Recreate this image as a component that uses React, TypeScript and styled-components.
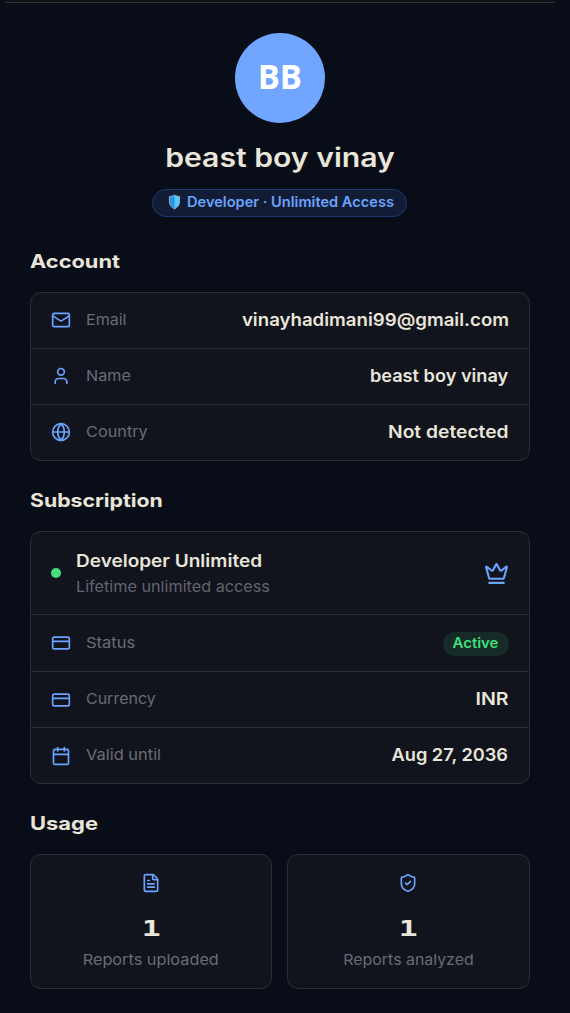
import React from "react";
import styled, { createGlobalStyle } from "styled-components";
import { Mail, User, Globe, Crown, CreditCard, Calendar, FileText, ShieldCheck } from "lucide-react";

const GlobalStyle = createGlobalStyle`
  * { box-sizing: border-box; }
  body {
    margin: 0;
    background: #090d18;
    color: #e9e5d9;
    font-family: Inter, "Liberation Sans", sans-serif;
  }
`;

const Page = styled.main`
  width: 570px;
  height: 1013px;
  overflow: hidden;
  padding: 0 15px 0 5px;
  background: #090d18;
`;

const TopBar = styled.div`
  height: 3px;
  background: #101114;
  border-bottom: 1px solid #303338;
`;

const Content = styled.div`
  padding: 30px 25px 0;
`;

const Profile = styled.header`
  display: flex;
  flex-direction: column;
  align-items: center;
`;

const Avatar = styled.div`
  width: 90px;
  height: 90px;
  padding-bottom: 4px;
  border-radius: 50%;
  background: #70a6ff;
  display: grid;
  place-items: center;
  color: #fff;
  font: 700 34px/1 "Open Sans", sans-serif;
`;

const Stretch = styled.span<{ $x?: number; $from?: string }>`
  display: inline-block;
  white-space: nowrap;
  transform: scaleX(${(p) => p.$x ?? 1});
  transform-origin: ${(p) => p.$from ?? "left"} center;
`;

const DisplayName = styled.h1`
  margin: 19px 0 0;
  font-size: 26px;
  line-height: 32px;
  font-weight: 600;
`;

const RoleBadge = styled.div`
  display: flex;
  align-items: center;
  gap: 6px;
  width: 255px;
  height: 28px;
  margin: 15px 1px 0 0;
  padding: 0 0 3px 15px;
  border: 1px solid #1b3974;
  border-radius: 14px;
  background: #121d35;
  color: #6ba3ff;
  font-size: 14px;
  font-weight: 600;
`;

const SectionTitle = styled.h2<{ $top: number }>`
  margin: ${(p) => p.$top}px 0 0 -0.5px;
  height: 24px;
  font-size: 18.5px;
  line-height: 23px;
  font-weight: 650;
`;

const Card = styled.section`
  margin-top: 18px;
  border: 1px solid #2a2e36;
  border-radius: 11px;
  background: #11141d;
`;

const Row = styled.div<{ $height?: number; $lift?: number }>`
  display: flex;
  align-items: center;
  height: ${(p) => p.$height ?? 56}px;
  padding: 0 20px;
  & + & { border-top: 1px solid #2a2e36; }
  > svg { color: #6ba3ff; flex: none; margin-bottom: ${(p) => p.$lift ?? 0}px; }
`;

const Label = styled.span`
  flex: 1;
  margin-left: 14.5px;
  padding-bottom: 2px;
  color: #696c73;
  font-size: 15px;
`;

const Value = styled.span`
  margin-right: 0.5px;
  padding-bottom: 3px;
  font-size: 17.5px;
  font-weight: 600;
`;

const StatusPill = styled.span`
  display: grid;
  place-items: center;
  width: 66px;
  height: 24px;
  margin-top: 2px;
  padding: 0 1px 3px 0;
  border-radius: 12px;
  background: #152b28;
  color: #41df7c;
  font-size: 14px;
  font-weight: 600;
`;

const StatusDot = styled.i`
  width: 10px;
  height: 10px;
  border-radius: 50%;
  background: #44df7c;
`;

const Plan = styled.div`
  flex: 1;
  margin-left: 14.5px;
  padding-top: 2px;
`;

const PlanName = styled.div`
  font-size: 17.5px;
  line-height: 26px;
  font-weight: 600;
`;

const PlanNote = styled.div`
  color: #62656d;
  font-size: 15px;
  line-height: 26px;
`;

const UsageGrid = styled.div`
  display: grid;
  grid-template-columns: 242px 243px;
  gap: 15px;
  margin-top: 18px;
`;

const UsageCard = styled.section`
  display: flex;
  flex-direction: column;
  align-items: center;
  height: 135px;
  padding-top: 18px;
  border: 1px solid #2a2e36;
  border-radius: 11px;
  background: #11141d;
  > svg { color: #6ba3ff; margin-right: 1px; }
`;

const Count = styled.div`
  margin-top: 20px;
  height: 32px;
  font: 700 21px/32px "DejaVu Sans Mono", monospace;
`;

const UsageLabel = styled.div`
  margin-top: 5px;
  color: #696c73;
  font-size: 15px;
  line-height: 20px;
`;

const accountRows = [
  { icon: Mail, label: "Email", value: "vinayhadimani99@gmail.com", lx: 1.07, vx: 1.064 },
  { icon: User, label: "Name", value: "beast boy vinay", lx: 1.08, vx: 1.038 },
  { icon: Globe, label: "Country", value: "Not detected", lx: 1.085, vx: 1.1 },
];

const billingRows = [
  { icon: CreditCard, label: "Currency", value: "INR", lx: 1.065, vx: 1.12 },
  { icon: Calendar, label: "Valid until", value: "Aug 27, 2036", lx: 1.095, vx: 1.04 },
];

type Detail = (typeof accountRows)[number] & { height?: number; lift?: number };

const DetailRow = ({ icon: Icon, label, value, lx, vx, height, lift }: Detail) => (
  <Row $height={height} $lift={lift}>
    <Icon size={20} />
    <Label><Stretch $x={lx}>{label}</Stretch></Label>
    <Value><Stretch $x={vx} $from="right">{value}</Stretch></Value>
  </Row>
);

const ShieldEmoji = () => (
  <svg width="13" height="16" viewBox="0 0 13 16">
    <path d="M6.5 1C5 2 3 2.400 1.400 2.500V7.700C1.400 10.900 3.500 13.400 6.500 15 9.500 13.400 11.600 10.900 11.600 7.700V2.500C10 2.400 8 2 6.500 1Z" fill="#2494e8" stroke="#9aabba" strokeWidth="1" />
    <path d="M6.500 1.600C8 2.500 9.600 2.900 11.100 3v4.700c0 2.800-1.800 5.100-4.600 6.700Z" fill="#59c8ff" />
  </svg>
);

export default function App() {
  return (
    <>
      <GlobalStyle />
      <Page>
        <TopBar />
        <Content>
          <Profile>
            <Avatar><Stretch $x={0.97} $from="center">BB</Stretch></Avatar>
            <DisplayName><Stretch $x={1.16} $from="center">beast boy vinay</Stretch></DisplayName>
            <RoleBadge>
              <ShieldEmoji />
              <Stretch $x={1.043}>Developer · Unlimited Access</Stretch>
            </RoleBadge>
          </Profile>

          <SectionTitle $top={33}><Stretch $x={1.18}>Account</Stretch></SectionTitle>
          <Card>
            {accountRows.map((row, i) => (
              <DetailRow key={row.label} {...row} height={i === 0 ? 55 : 56} lift={1} />
            ))}
          </Card>

          <SectionTitle $top={28}><Stretch $x={1.15}>Subscription</Stretch></SectionTitle>
          <Card>
            <Row $height={82}>
              <StatusDot />
              <Plan>
                <PlanName><Stretch $x={1.087}>Developer Unlimited</Stretch></PlanName>
                <PlanNote><Stretch $x={1.08}>Lifetime unlimited access</Stretch></PlanNote>
              </Plan>
              <Crown size={25} />
            </Row>
            <Row $height={57}>
              <CreditCard size={20} />
              <Label><Stretch $x={1.1}>Status</Stretch></Label>
              <StatusPill><Stretch $x={1.07} $from="center">Active</Stretch></StatusPill>
            </Row>
            {billingRows.map((row) => <DetailRow key={row.label} {...row} />)}
          </Card>

          <SectionTitle $top={28}><Stretch $x={1.185}>Usage</Stretch></SectionTitle>
          <UsageGrid>
            <UsageCard>
              <FileText size={20} />
              <Count><Stretch $x={1.5} $from="center">1</Stretch></Count>
              <UsageLabel><Stretch $x={1.085} $from="center">Reports uploaded</Stretch></UsageLabel>
            </UsageCard>
            <UsageCard>
              <ShieldCheck size={20} />
              <Count><Stretch $x={1.5} $from="center">1</Stretch></Count>
              <UsageLabel><Stretch $x={1.06} $from="center">Reports analyzed</Stretch></UsageLabel>
            </UsageCard>
          </UsageGrid>
        </Content>
      </Page>
    </>
  );
}
